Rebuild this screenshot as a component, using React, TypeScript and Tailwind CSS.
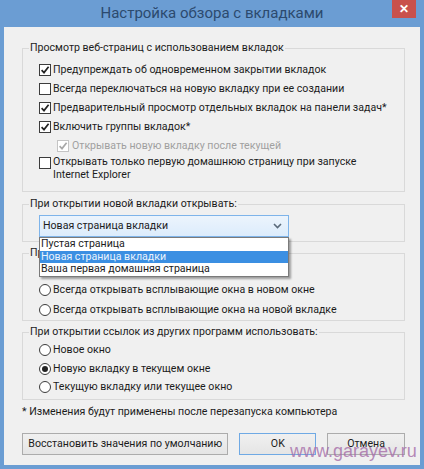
function Box({ checked = false, disabled = false }: { checked?: boolean; disabled?: boolean }) {
  return (
    <span
      className={`flex h-[12px] w-[12px] shrink-0 items-center justify-center border bg-white ${
        disabled ? "border-[#c4c4c4]" : "border-[#3c3c3c]"
      }`}
    >
      {checked && (
        <svg viewBox="0 0 10 10" className="h-[10px] w-[10px]">
          <path
            d="M1.6 5.2 L4 7.6 L8.6 1.8"
            fill="none"
            stroke={disabled ? "#a8a8a8" : "#222"}
            strokeWidth="1.7"
          />
        </svg>
      )}
    </span>
  );
}

function Radio({ checked = false }: { checked?: boolean }) {
  return (
    <span className="flex h-[12px] w-[12px] shrink-0 items-center justify-center rounded-full border border-[#3c3c3c] bg-white">
      {checked && <span className="h-[6px] w-[6px] rounded-full bg-[#222]" />}
    </span>
  );
}

function Group({ title, children, className = "" }: { title: string; children: React.ReactNode; className?: string }) {
  return (
    <fieldset className={`border border-[#d9d9d9] px-0 ${className}`}>
      <legend className="ml-[6px] px-[1px] leading-[14px]">{title}</legend>
      {children}
    </fieldset>
  );
}

function Cursor() {
  return (
    <svg viewBox="0 0 12 19" className="absolute left-[173px] top-[255px] h-[19px] w-[12px]">
      <path
        d="M0.5 0.5 L0.5 15.5 L4 12.2 L6.6 18 L8.8 17 L6.3 11.3 L11 11.3 Z"
        fill="#fff"
        stroke="#000"
        strokeWidth="1"
        strokeLinejoin="round"
      />
    </svg>
  );
}

export default function App() {
  return (
    <div className="relative flex h-[469px] w-[424px] flex-col overflow-hidden whitespace-nowrap bg-[#6b9dd3] font-['Roboto',sans-serif] text-[10.6px] text-[#1c1c1c]">
      {/* title bar */}
      <div className="relative flex h-[27px] shrink-0 items-center justify-center">
        <span className="text-[15px] leading-none text-[#2c4a6e]">Настройка обзора с вкладками</span>
        <div className="absolute right-[8px] top-0 flex h-[18px] w-[24px] items-center justify-center bg-[#c9514c] text-[12px] font-bold leading-none text-white">
          ✕
        </div>
      </div>

      <div className="mx-[4px] mb-[4px] flex flex-1 flex-col bg-[#f0f0f0] pl-[18px] pr-[15px] pt-[14px]">
        <Group title="Просмотр веб-страниц с использованием вкладок">
          <div className="pb-[10px] pl-[16px] pt-[5px]">
            <label className="flex h-[19px] items-center gap-[2px]">
              <Box checked />
              <span>Предупреждать об одновременном закрытии вкладок</span>
            </label>
            <label className="flex h-[19px] items-center gap-[2px]">
              <Box />
              <span>Всегда переключаться на новую вкладку при ее создании</span>
            </label>
            <label className="flex h-[19px] items-center gap-[2px]">
              <Box checked />
              <span>Предварительный просмотр отдельных вкладок на панели задач*</span>
            </label>
            <label className="flex h-[19px] items-center gap-[2px]">
              <Box checked />
              <span>Включить группы вкладок*</span>
            </label>
            <label className="flex h-[19px] items-center gap-[3px] pl-[18px] text-[#a0a0a0]">
              <Box checked disabled />
              <span>Открывать новую вкладку после текущей</span>
            </label>
            <label className="mt-[1px] flex items-start gap-[2px]">
              <span className="pt-[0.5px]">
                <Box />
              </span>
              <span className="leading-[12.5px]">
                Открывать только первую домашнюю страницу при запуске
                <br />
                Internet Explorer
              </span>
            </label>
          </div>
        </Group>

        <Group title="При открытии новой вкладки открывать:" className="mt-[5px]">
          <div className="pb-[4px] pl-[16px] pt-[4px]">
            <div className="relative w-[250px]">
              <div className="flex h-[22px] items-center justify-between border border-[#7eb4ea] bg-gradient-to-b from-[#ecf4fc] to-[#dcecfc] pl-[3px] pr-[6px]">
                <span>Новая страница вкладки</span>
                <svg viewBox="0 0 9 6" className="h-[6px] w-[9px]">
                  <path d="M1 1 L4.5 4.5 L8 1" fill="none" stroke="#5a6a7a" strokeWidth="1.6" />
                </svg>
              </div>
              <div className="absolute left-0 top-full z-10 w-[250px] border border-[#7a7a7a] bg-white leading-[12.5px] shadow-[2px_2px_2px_rgba(0,0,0,0.35)]">
                <div className="pl-[1px]">Пустая страница</div>
                <div className="bg-[#3b8fe2] pl-[1px] text-[#eaf3fc]">Новая страница вкладки</div>
                <div className="pl-[1px]">Ваша первая домашняя страница</div>
              </div>
            </div>
          </div>
        </Group>

        <Group title="При обнаружении всплывающего окна:" className="mt-[4px]">
          <div className="pl-[16px]">
            <label className="flex h-[20px] items-center gap-[2px]">
              <Radio checked />
              <span className="invisible">Определять автоматически</span>
            </label>
            <label className="flex h-[20px] items-center gap-[2px]">
              <Radio />
              <span>Всегда открывать всплывающие окна в новом окне</span>
            </label>
            <label className="flex h-[20px] items-center gap-[2px]">
              <Radio />
              <span>Всегда открывать всплывающие окна на новой вкладке</span>
            </label>
          </div>
        </Group>

        <Group title="При открытии ссылок из других программ использовать:" className="mt-[4px]">
          <div className="pb-[2px] pl-[16px] pt-[2px]">
            <label className="flex h-[18.5px] items-center gap-[2px]">
              <Radio />
              <span>Новое окно</span>
            </label>
            <label className="flex h-[18.5px] items-center gap-[2px]">
              <Radio checked />
              <span>Новую вкладку в текущем окне</span>
            </label>
            <label className="flex h-[18.5px] items-center gap-[2px]">
              <Radio />
              <span>Текущую вкладку или текущее окно</span>
            </label>
          </div>
        </Group>

        <p className="mt-[5px] leading-[14px]">* Изменения будут применены после перезапуска компьютера</p>

        <div className="mt-[14px] flex gap-[11px]">
          <button className="h-[22px] w-[207px] border border-[#acacac] bg-gradient-to-b from-[#f0f0f0] to-[#e5e5e5]">
            Восстановить значения по умолчанию
          </button>
          <button className="h-[22px] w-[77px] border border-[#6fa9e4] bg-gradient-to-b from-[#f0f0f0] to-[#e5e5e5]">
            OK
          </button>
          <button className="h-[22px] w-[78px] border border-[#acacac] bg-gradient-to-b from-[#f0f0f0] to-[#e5e5e5]">
            Отмена
          </button>
        </div>
      </div>

      <Cursor />
      <span className="absolute left-[290px] top-[441px] font-['Liberation_Sans',sans-serif] text-[18px] leading-[20px] text-[#a56ca8]/80">
        www.garayev.ru
      </span>
    </div>
  );
}
